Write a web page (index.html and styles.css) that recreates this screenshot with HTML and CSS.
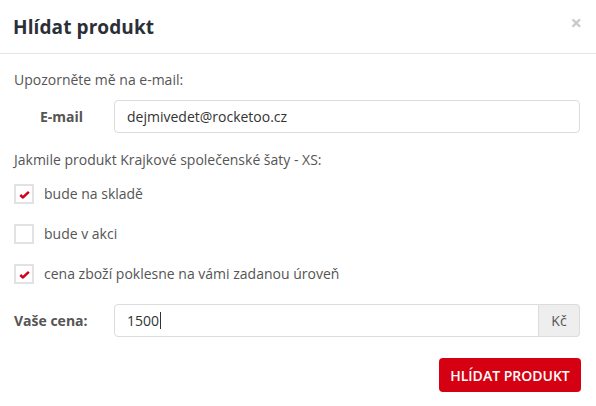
FILE: index.html
```html
<!DOCTYPE html>
<html lang="cs">
<head>
<meta charset="utf-8">
<link rel="stylesheet" href="styles.css">
</head>
<body>
<div class="modal">
  <div class="modal-header">
    <h4 class="title">Hlídat produkt</h4>
    <span class="close">×</span>
  </div>
  <div class="modal-body">
    <p class="intro">Upozorněte mě na e-mail:</p>
    <div class="row row-email">
      <label class="lbl lbl-email">E-mail</label>
      <div class="input">dejmivedet@rocketoo.cz</div>
    </div>
    <p class="intro intro2">Jakmile produkt Krajkové společenské šaty - XS:</p>
    <div class="checks">
      <div class="check"><span class="box"><svg viewBox="0 0 12 10" width="11" height="9"><path d="M1.3 5.6 L4.3 8.3 L10.8 2" fill="none" stroke="#d0021b" stroke-width="2.8" stroke-linejoin="round"/></svg></span><span>bude na skladě</span></div>
      <div class="check"><span class="box"></span><span>bude v akci</span></div>
      <div class="check"><span class="box"><svg viewBox="0 0 12 10" width="11" height="9"><path d="M1.3 5.6 L4.3 8.3 L10.8 2" fill="none" stroke="#d0021b" stroke-width="2.8" stroke-linejoin="round"/></svg></span><span>cena zboží poklesne na vámi zadanou úroveň</span></div>
    </div>
    <div class="row row-price">
      <label class="lbl">Vaše cena:</label>
      <div class="group">
        <div class="input input-price">1500<span class="caret"></span></div>
        <span class="addon">Kč</span>
      </div>
    </div>
    <div class="actions">
      <button class="btn">HLÍDAT PRODUKT</button>
    </div>
  </div>
</div>
</body>
</html>
```
FILE: styles.css
```css
* { box-sizing: border-box; }
html, body { margin: 0; padding: 0; background: #fff; }
body {
  font-family: "Open Sans", "Liberation Sans", sans-serif;
  font-size: 14px;
  line-height: 20px;
  color: #555;
  width: 596px;
  height: 406px;
  overflow: hidden;
}
.modal-header {
  height: 54px;
  border-bottom: 1px solid #e5e5e5;
  display: flex;
  align-items: center;
  justify-content: space-between;
  padding: 0 14px 0 13px;
}
.title {
  margin: 0;
  font-size: 19px;
  font-weight: 700;
  color: #2b3038;
  letter-spacing: 0.1px;
}
.close {
  color: #c8c8c8;
  font-size: 20px;
  font-weight: 700;
  line-height: 20px;
  margin-top: -8px;
}
.modal-body {
  padding: 16px 16px 0 14px;
}
.intro { margin: 0; }
.row {
  display: flex;
  align-items: center;
}
.row-email { margin-top: 10px; }
.lbl {
  width: 100px;
  flex: none;
  font-weight: 700;
  color: #555;
}
.lbl-email { padding-left: 26px; }
.input {
  flex: 1;
  height: 33px;
  border: 1px solid #dcdcdc;
  border-radius: 4px;
  padding: 0 12px;
  display: flex;
  align-items: center;
  color: #333;
}
.intro2 { margin-top: 17px; }
.checks {
  margin-top: 14px;
  display: flex;
  flex-direction: column;
  gap: 20px;
}
.check {
  display: flex;
  align-items: center;
  gap: 10px;
  height: 20px;
  color: #555;
}
.box {
  width: 20px;
  height: 20px;
  border: 2px solid #e2e2e2;
  display: flex;
  align-items: center;
  justify-content: center;
  flex: none;
}
.row-price { margin-top: 20px; }
.group {
  flex: 1;
  display: flex;
}
.input-price {
  border-radius: 4px 0 0 4px;
}
.caret {
  display: inline-block;
  width: 1px;
  height: 17px;
  background: #333;
  margin-left: 1px;
}
.addon {
  width: 41px;
  height: 33px;
  background: #eee;
  border: 1px solid #dcdcdc;
  border-left: 0;
  border-radius: 0 4px 4px 0;
  display: flex;
  align-items: center;
  justify-content: center;
  color: #555;
}
.actions {
  margin-top: 21px;
  display: flex;
  justify-content: flex-end;
  padding-right: 0;
}
.btn {
  height: 34px;
  width: 142px;
  margin-right: -1px;
  border: 0;
  border-radius: 4px;
  background: #d50113;
  color: #fff;
  font-family: "Open Sans", "Liberation Sans", sans-serif;
  font-size: 14px;
  font-weight: 600;
  padding: 0;
}
```
